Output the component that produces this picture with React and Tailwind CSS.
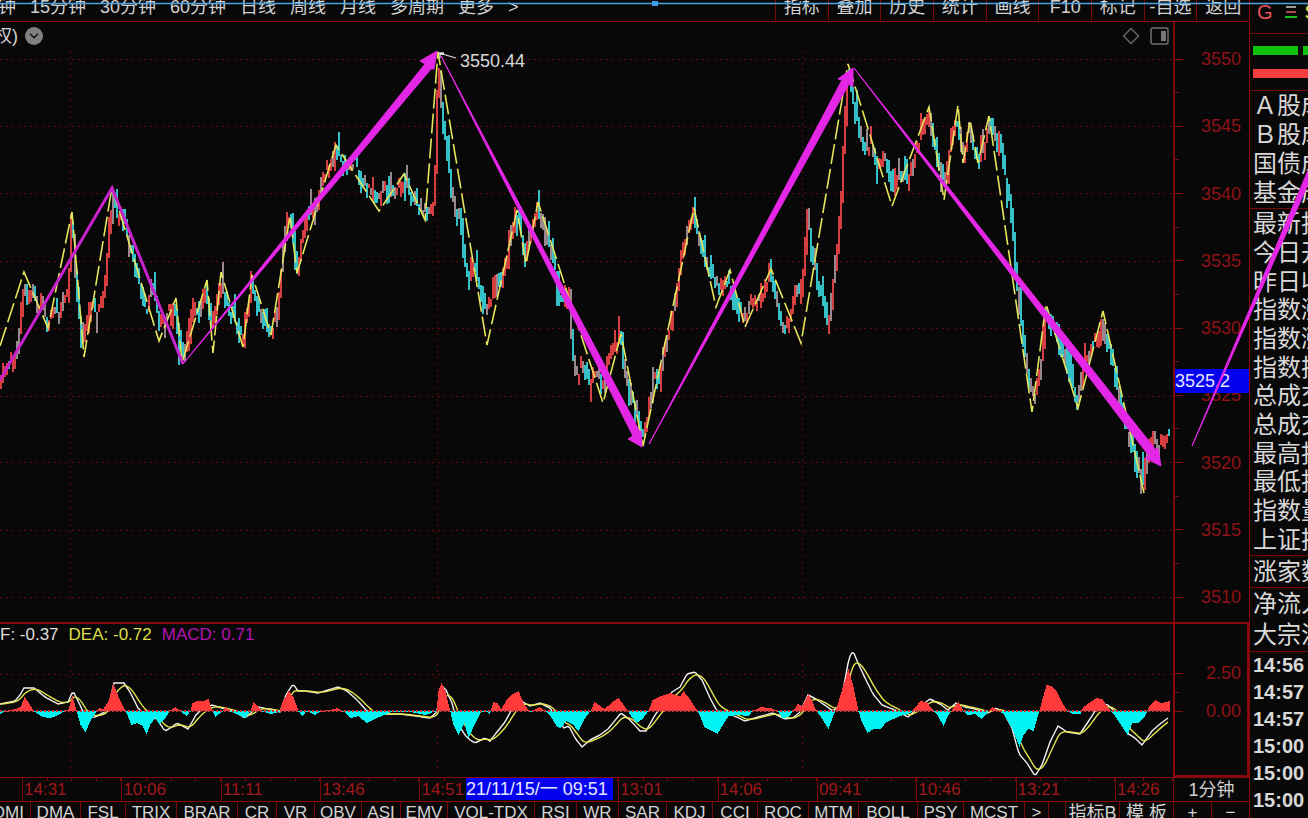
import React from 'react';
import { ChevronDown } from 'lucide-react';

const PERIODS = ['钟', '15分钟', '30分钟', '60分钟', '日线', '周线', '月线', '多周期', '更多', '>'];
const TOOLS = ['指标', '叠加', '历史', '统计', '画线', 'F10', '标记', '-自选', '返回'];

const INDICATORS = [
  ['DMA', 'w-[50px]'], ['FSL', 'w-[45px]'], ['TRIX', 'w-[51px]'], ['BRAR', 'w-[61px]'],
  ['CR', 'w-[39px]'], ['VR', 'w-[38px]'], ['OBV', 'w-[47px]'], ['ASI', 'w-[39px]'],
  ['EMV', 'w-[47px]'], ['VOL-TDX', 'w-[87px]'], ['RSI', 'w-[42px]'], ['WR', 'w-[42px]'],
  ['SAR', 'w-[48px]'], ['KDJ', 'w-[46px]'], ['CCI', 'w-[45px]'], ['ROC', 'w-[51px]'],
  ['MTM', 'w-[50px]'], ['BOLL', 'w-[59px]'], ['PSY', 'w-[46px]'], ['MCST', 'w-[61px]'],
  ['>', 'w-[24px]'],
];

const TIMES = ['14:31', '10:06', '11:11', '13:46', '14:51', '', '13:01', '14:06', '09:41', '10:46', '13:21'];
const PRICES = ['3550', '', '3545', '', '3540', '', '3535', '', '3530', '', '3525', '', '3520', '', '3515', '', '3510'];
const GRID_Y = [59, 126, 193, 261, 328, 396, 462, 530, 597];
const DAY_X = [70, 437, 802];

const GROUPS = [
  { rows: ['Ａ股成', 'Ｂ股成', '国债成', '基金成'], h: 'h-[118px]' },
  { rows: ['最新指', '今日开', '昨日收', '指数涨', '指数涨', '指数振', '总成交', '总成交', '最高指', '最低指', '指数量', '上证换'], h: 'h-[347px]' },
  { rows: ['涨家数'], h: 'h-[32px]' },
  { rows: ['净流入', '大宗流'], h: 'h-[64px]' },
];
const TICKS = ['14:56', '14:57', '14:57', '15:00', '15:00', '15:00'];

// 走势锚点
const PRICE_PATH = [
  [0, 388], [4, 372], [8, 362], [14, 358], [18, 345], [22, 310], [25, 285], [29, 298], [33, 290], [38, 312],
  [43, 303], [48, 322], [54, 312], [60, 310], [64, 298], [69, 290], [71, 240], [73, 222], [76, 270], [80, 320],
  [84, 345], [88, 320], [93, 300], [97, 312], [103, 300], [107, 280], [110, 225], [114, 200], [118, 218], [122, 212],
  [126, 222], [130, 250], [136, 265], [142, 295], [147, 312], [152, 288], [156, 300], [160, 325], [165, 315], [170, 310],
  [175, 302], [180, 340], [184, 358], [190, 330], [195, 303], [200, 310], [206, 285], [212, 330], [218, 300], [222, 280],
  [230, 310], [237, 325], [243, 340], [248, 310], [252, 285], [258, 305], [265, 320], [271, 330], [277, 320], [281, 280],
  [285, 235], [289, 222], [293, 230], [298, 265], [303, 240], [308, 210], [313, 215], [318, 200], [322, 180], [328, 170],
  [333, 155], [336, 148], [341, 160], [346, 165], [350, 162], [356, 162], [362, 182], [368, 190], [373, 188], [379, 200],
  [385, 185], [392, 190], [398, 188], [404, 178], [410, 193], [416, 198], [423, 210], [430, 212], [435, 204], [437, 130],
  [439, 62], [441, 90], [444, 125], [448, 150], [452, 190], [457, 220], [460, 215], [465, 260], [470, 280], [475, 265],
  [480, 285], [487, 305], [492, 300], [497, 270], [502, 285], [508, 255], [513, 225], [517, 215], [522, 235], [526, 258],
  [531, 235], [538, 207], [543, 220], [550, 250], [556, 270], [560, 300], [565, 305], [570, 290], [573, 350], [577, 378],
  [583, 365], [590, 380], [597, 370], [603, 385], [608, 360], [615, 345], [621, 338], [626, 370], [632, 395], [638, 415],
  [643, 438], [648, 415], [654, 380], [660, 380], [664, 350], [670, 330], [676, 300], [682, 260], [688, 230], [694, 213],
  [700, 240], [706, 262], [712, 275], [720, 290], [727, 275], [733, 290], [740, 310], [746, 315], [753, 305], [760, 300],
  [765, 290], [771, 278], [776, 300], [781, 318], [786, 328], [791, 315], [796, 290], [801, 300], [804, 270], [808, 215],
  [813, 250], [818, 280], [822, 290], [826, 310], [829, 328], [833, 290], [838, 250], [842, 190], [845, 120], [848, 75],
  [851, 90], [855, 110], [860, 130], [867, 150], [872, 145], [878, 160], [883, 158], [888, 165], [893, 190], [900, 175],
  [908, 180], [914, 160], [920, 140], [926, 120], [930, 112], [934, 140], [940, 165], [945, 185], [950, 150], [957, 115],
  [963, 155], [969, 128], [975, 150], [980, 158], [986, 140], [990, 122], [997, 142], [1001, 132], [1005, 170], [1009, 190],
  [1013, 215], [1016, 270], [1021, 320], [1026, 360], [1031, 388], [1036, 395], [1042, 360], [1046, 315], [1052, 325],
  [1058, 332], [1065, 360], [1072, 385], [1078, 400], [1084, 365], [1092, 345], [1098, 340], [1103, 320], [1110, 350],
  [1116, 375], [1122, 410], [1126, 430], [1132, 440], [1138, 460], [1144, 483], [1150, 445], [1155, 438], [1158, 450],
  [1163, 437], [1168, 432],
];

const ZIGZAG =
  '0,346 24,272 48,328 72,212 84,357 112,187 159,341 176,298 182,363 207,280 213,353 221,272 243,347 252,275 271,335 ' +
  '290,216 297,273 336,145 379,211 404,174 425,220 438,52 487,345 517,210 526,264 538,202 603,403 621,334 643,446 ' +
  '694,208 716,307 730,270 745,327 771,269 801,343 848,64 892,206 929,107 944,200 958,105 963,163 970,120 978,163 ' +
  '989,116 1032,412 1046,304 1078,408 1103,311 1144,493';

const HIST = [
  [0, -3], [5, 0], [15, 2], [20, 4], [24, 14], [28, 9], [33, 0], [36, -2], [42, -6], [50, -7], [58, -4], [64, 0],
  [68, 2], [72, 15], [75, 4], [77, -3], [80, -14], [85, -21], [90, -10], [95, -2], [99, 3], [103, 2], [108, 10],
  [113, 27], [118, 14], [125, 0], [127, -4], [131, -14], [137, -12], [142, -15], [146, -23], [150, -13], [155, -7],
  [159, -13], [165, -7], [169, 0], [175, 4], [180, 0], [186, -5], [190, 0], [192, 8], [197, 10], [203, 10], [208, 12],
  [211, 2], [215, -6], [222, 0], [225, 4], [230, 0], [236, -3], [245, -7], [250, 0], [253, 9], [257, 5], [262, 0],
  [270, -3], [279, -1], [282, 9], [288, 20], [293, 14], [298, 0], [302, -5], [306, 0], [315, -4], [320, 0], [330, 1],
  [337, 3], [343, 0], [350, -7], [358, -5], [366, -12], [374, -8], [384, -4], [390, -1], [410, -1], [425, -4],
  [436, 0], [438, 20], [441, 28], [445, 20], [449, 3], [453, -14], [458, -24], [464, -12], [468, -27], [474, -14],
  [480, -2], [485, 1], [489, -3], [493, 9], [497, 8], [501, 2], [506, 11], [512, 17], [518, 20], [524, 6], [530, -1],
  [539, 4], [545, 0], [550, -5], [556, -15], [560, -17], [566, -10], [572, -13], [578, -20], [584, -8], [590, 0],
  [594, 9], [600, 5], [604, 2], [612, 9], [618, 13], [624, 5], [629, -3], [636, -12], [642, -8], [648, 0], [652, 11],
  [658, 14], [664, 16], [670, 18], [675, 16], [680, 15], [683, 20], [690, 11], [696, 2], [699, -4], [704, -16],
  [712, -20], [717, -23], [723, -13], [728, -5], [738, -4], [748, -5], [752, 0], [760, 4], [770, 3], [777, 0],
  [782, -7], [788, -6], [793, 0], [797, 7], [802, 5], [808, 17], [812, 9], [816, 0], [820, -5], [828, -18], [833, -4],
  [837, 6], [843, 26], [848, 42], [853, 24], [858, 0], [861, -10], [867, -22], [873, -18], [880, -18], [886, -11],
  [893, -8], [900, -5], [910, -2], [914, 3], [920, 10], [926, 9], [932, 2], [937, -4], [943, -15], [948, -4], [952, 2],
  [958, 9], [963, 0], [967, -4], [975, -3], [981, -8], [987, -2], [992, 4], [998, 1], [1004, -4], [1012, -18],
  [1019, -36], [1023, -24], [1028, -18], [1033, -20], [1038, -3], [1041, 8], [1046, 26], [1051, 25], [1056, 20],
  [1062, 8], [1067, 0], [1072, -3], [1080, -3], [1083, 4], [1090, 9], [1096, 13], [1102, 12], [1108, 3], [1114, -4],
  [1120, -13], [1127, -24], [1132, -12], [1138, -12], [1144, -6], [1149, 5], [1155, 11], [1161, 8], [1169, 10],
];

const DIF = [
  [0, 704], [15, 701], [20, 695], [24, 688], [34, 688], [45, 697], [58, 704], [68, 702], [73, 691], [80, 705],
  [86, 718], [95, 717], [105, 712], [110, 700], [114, 683], [124, 683], [130, 692], [138, 708], [150, 720], [156, 718],
  [165, 731], [172, 727], [177, 723], [188, 729], [196, 715], [202, 709], [212, 705], [225, 709], [235, 712],
  [245, 718], [252, 712], [258, 707], [268, 709], [280, 712], [286, 695], [293, 684], [298, 691], [305, 691],
  [318, 693], [338, 687], [347, 691], [357, 700], [366, 710], [374, 716], [385, 714], [400, 714], [415, 716],
  [430, 718], [437, 712], [442, 686], [446, 690], [452, 703], [457, 722], [465, 735], [470, 740], [475, 743],
  [485, 738], [490, 741], [497, 732], [505, 722], [512, 709], [519, 700], [530, 706], [540, 703], [550, 708],
  [558, 720], [564, 728], [569, 726], [575, 738], [582, 747], [590, 740], [600, 735], [608, 729], [621, 713],
  [630, 720], [640, 731], [646, 731], [655, 715], [665, 702], [672, 692], [680, 687], [687, 674], [695, 672],
  [702, 680], [710, 698], [717, 711], [728, 713], [745, 721], [758, 717], [773, 713], [785, 719], [793, 718],
  [800, 712], [808, 695], [816, 699], [826, 706], [833, 711], [840, 705], [845, 680], [849, 658], [853, 651],
  [858, 663], [865, 678], [873, 694], [882, 705], [895, 710], [908, 717], [918, 708], [930, 699], [940, 704],
  [948, 710], [956, 703], [965, 707], [975, 709], [988, 713], [995, 708], [1003, 711], [1012, 728], [1019, 754],
  [1027, 763], [1035, 776], [1042, 765], [1050, 742], [1058, 726], [1067, 732], [1080, 734], [1088, 722], [1097, 708],
  [1107, 704], [1115, 712], [1127, 733], [1135, 738], [1142, 745], [1152, 731], [1160, 724], [1168, 718],
];

// 线性插值，步长 step
function sample(points, step) {
  const out = [];
  let i = 0;
  for (let x = points[0][0]; x <= points[points.length - 1][0]; x += step) {
    while (i < points.length - 2 && points[i + 1][0] < x) i++;
    const [x0, y0] = points[i];
    const [x1, y1] = points[i + 1];
    out.push([x, y0 + ((y1 - y0) * (x - x0)) / (x1 - x0)]);
  }
  return out;
}

const noise = (n) => {
  const v = Math.sin(n * 12.9898) * 43758.5453;
  return v - Math.floor(v);
};

const line = sample(PRICE_PATH, 2);
const candles = line.map(([x, y], i) => {
  const next = line[i + 1] ? line[i + 1][1] : y;
  const shift = (noise(i + 7) - 0.5) * 12;
  const wick = noise(i + 61) > 0.82 ? 12 : 0;
  const up = noise(i + 17) > 0.5;
  const top = Math.min(y, next) - 1 - noise(i) * 6 + shift - (up ? wick : 0);
  const bottom = Math.max(y, next) + 1 + noise(i + 500) * 7 + shift + (up ? 0 : wick);
  const flat = Math.abs(next - y) < 2;
  let color = next < y ? '#d63f42' : '#35bfc6';
  if (flat && noise(i + 90) > 0.4) color = noise(i + 30) > 0.5 ? '#d63f42' : '#35bfc6';
  if (noise(i + 900) > 0.8) color = '#98878c';
  return { x, top: Math.max(top, 54), h: bottom - Math.max(top, 54), color };
});

const bars = sample(HIST, 1);

const dif = sample(DIF, 2);
let last = dif[0][1];
const dea = dif.map(([x, y]) => {
  last += (y - last) * 0.28;
  return [x, last];
});

const toPoints = (arr) => arr.map((p) => p.join(',')).join(' ');

function Toolbar() {
  return (
    <header className="flex h-[22px] shrink-0 justify-between overflow-hidden border-b border-[#8a0c0c] text-lg text-[#d2d2d2]">
      <nav className="-ml-[2px] flex items-center gap-[14px] pb-2">
        {PERIODS.map((p) => <button key={p} className="whitespace-nowrap">{p}</button>)}
      </nav>
      <div className="grid w-[474px] grid-cols-9">
        {TOOLS.map((t) => (
          <button key={t} className="flex h-[21px] items-center justify-center whitespace-nowrap border-l border-[#7a0a0a] pb-2">{t}</button>
        ))}
      </div>
    </header>
  );
}

function PriceChart() {
  return (
    <div className="relative min-w-0 flex-1">
      <svg className="absolute inset-0 h-full w-full" viewBox="0 22 1173 600" preserveAspectRatio="none">
        <g stroke="#600a0a" strokeDasharray="2 4" shapeRendering="crispEdges">
          {GRID_Y.map((y) => <line key={y} x1="0" x2="1173" y1={y + 0.5} y2={y + 0.5} />)}
          {DAY_X.map((x) => <line key={x} x1={x} x2={x} y1="51" y2="600" />)}
        </g>
        <g shapeRendering="crispEdges">
          {candles.map((c) => <rect key={c.x} x={c.x} y={c.top} width="2" height={c.h} fill={c.color} />)}
        </g>
        <polyline points={ZIGZAG} fill="none" stroke="#e6e65a" strokeWidth="1.6" strokeDasharray="20 5" />
        <path d="M438 53h6M439 53l17 5M440 53v5" fill="none" stroke="#ddd" strokeWidth="1.3" />
        <text x="460" y="67" fill="#d8d8d8" fontSize="18">3550.44</text>
      </svg>
      <div className="absolute top-0 right-0 left-0 flex h-7 items-center pr-1 text-lg text-[#d2d2d2]">
        <span className="-ml-[6px]">权)</span>
        <button aria-label="展开" className="ml-[7px] flex h-[18px] w-[18px] items-center justify-center rounded-full bg-[#808080] text-[#161616]">
          <ChevronDown size={14} strokeWidth={3} />
        </button>
        <div className="ml-auto flex items-center gap-[10px]">
          <button aria-label="标记点">
            <svg width="18" height="18" viewBox="0 0 18 18" fill="none" stroke="#666" strokeWidth="1.5"><path d="M9 1.5 16.5 9 9 16.5 1.5 9z" /></svg>
          </button>
          <button aria-label="侧栏">
            <svg width="19" height="18" viewBox="0 0 19 18"><rect x="1" y="1" width="17" height="16" rx="2" fill="none" stroke="#707070" strokeWidth="1.5" /><rect x="11" y="4" width="5" height="10" fill="#777" /></svg>
          </button>
        </div>
      </div>
    </div>
  );
}

function PriceAxis() {
  return (
    <div className="relative flex w-[76px] shrink-0 flex-col justify-between border-l-2 border-[#7a0808] pt-[27px] pr-2 pb-[15px] text-lg text-[#8f1216]">
      {PRICES.map((p, i) => (
        <div key={i} className="flex h-5 items-center justify-between">
          <i className={p ? 'h-px w-2 bg-[#8a0c0c]' : 'h-px w-1 bg-[#8a0c0c]'} />
          <span>{p}</span>
        </div>
      ))}
      <div className="absolute top-[347px] right-0 left-0 flex h-6 items-center bg-[#0202f0] text-[#e6e6ff]">3525.2</div>
    </div>
  );
}

function MacdPanel() {
  return (
    <section className="flex h-[155px] shrink-0 border-t-2 border-[#8a0808]">
      <div className="relative min-w-0 flex-1">
        <svg className="absolute inset-0 h-full w-full" viewBox="0 624 1173 153" preserveAspectRatio="none">
          <g stroke="#600a0a" strokeDasharray="2 4" shapeRendering="crispEdges">
            <line x1="0" x2="1173" y1="674.5" y2="674.5" />
            {DAY_X.map((x) => <line key={x} x1={x} x2={x} y1="652" y2="777" />)}
          </g>
          <polyline points={toPoints(dif)} fill="none" stroke="#f2f2f2" strokeWidth="1.4" />
          <polyline points={toPoints(dea)} fill="none" stroke="#e6e650" strokeWidth="1.4" />
          <g shapeRendering="crispEdges">
            {bars.map(([x, v]) => (
              <rect key={x} x={x} y={v > 0 ? 711 - v : 711} width="1" height={Math.max(Math.abs(v), 1)} fill={v > 0 ? '#ff3b3b' : '#00f4f4'} />
            ))}
            <line x1="0" x2="1170" y1="711" y2="711" stroke="#c23a3a" strokeWidth="2" strokeDasharray="2 2" />
          </g>
        </svg>
        <p className="absolute top-0 left-0 flex gap-[10px] text-[17px] leading-[22px] whitespace-nowrap">
          <span className="text-[#dedede]">F: -0.37</span>
          <span className="text-[#dede46]">DEA: -0.72</span>
          <span className="text-[#b414b4]">MACD: 0.71</span>
        </p>
      </div>
      <div className="w-[76px] shrink-0 border-2 border-t-0 border-[#8a0808] pt-[40px] pr-[6px] text-lg leading-[19px] text-[#8f1216]">
        {['2.50', '', '0.00'].map((v, i) => (
          <div key={i} className="flex h-[19px] items-center justify-between">
            <i className={v ? 'h-px w-2 bg-[#8a0c0c]' : 'h-px w-1 bg-[#8a0c0c]'} />
            <span>{v}</span>
          </div>
        ))}
      </div>
    </section>
  );
}

function TimeCell({ time, size, ticks }) {
  return (
    <div className={`${size} border-l border-[#7a0808]`}>
      <div className="flex h-[3px]">
        {ticks.map((t) => <i key={t} className="flex-1 border-r border-[#7a0808]" />)}
      </div>
      <p className="pl-px text-[17px] leading-[18px]">{time}</p>
    </div>
  );
}

function TimeAxis() {
  return (
    <div className="flex h-6 shrink-0 border-t border-[#8a0808]">
      <div className="relative flex min-w-0 flex-1 pl-[22px] text-[#a0181a]">
        {TIMES.map((t, i) => <TimeCell key={i} time={t} size="w-[99px] grow" ticks={[1, 2, 3, 4]} />)}
        <TimeCell time="14:26" size="w-[58px]" ticks={[1, 2]} />
        <div className="absolute top-0 left-[466px] flex h-[22px] w-[147px] items-center bg-[#0202f0] text-lg whitespace-nowrap text-[#e6e6ff]">21/11/15/一 09:51</div>
      </div>
      <button className="w-[76px] shrink-0 border-l border-[#7a0808] text-lg leading-[22px] text-[#d2d2d2]">1分钟</button>
    </div>
  );
}

function IndicatorTabs() {
  const tab = 'flex h-[21px] shrink-0 items-center justify-center whitespace-nowrap border-l border-[#7a0808]';
  return (
    <nav className="flex h-[17px] shrink-0 items-start overflow-hidden border-t border-[#8a0808] text-[17px] text-[#d2d2d2]">
      <button className="flex h-[21px] w-[30px] shrink-0 items-center justify-end pr-[6px]">DMI</button>
      {INDICATORS.map(([name, w]) => <button key={name} className={`${tab} ${w}`}>{name}</button>)}
      <div className={`${tab} w-[17px] grow`} />
      <button className={`${tab} w-[54px] text-lg`}>指标B</button>
      <button className={`${tab} w-[54px] text-lg`}>模 板</button>
      <button className={`${tab} w-[38px]`}>+</button>
      <button className={`${tab} w-[38px]`}>−</button>
    </nav>
  );
}

function QuotePanel() {
  return (
    <aside className="w-[59px] shrink-0 overflow-hidden border-l border-[#8a0808] text-2xl whitespace-nowrap text-[#d8d8d8]">
      <div className="flex h-[34px] items-start gap-3 border-b border-[#7a0808] pl-[7px] text-xl leading-6">
        <b className="font-normal text-[#e8505a]">G</b>
        <svg className="mt-[5px] shrink-0" width="12" height="14" viewBox="0 0 12 14" shapeRendering="crispEdges">
          <path d="M1 2h10" stroke="#999" strokeWidth="2" />
          <path d="M1 7h10" stroke="#b04a4a" strokeWidth="2" />
          <path d="M0 12h12" stroke="#18c018" strokeWidth="2" />
        </svg>
        <span className="-ml-1 text-[#e6e63c]">S</span>
      </div>
      <div className="flex h-[57px] flex-col gap-[14px] border-b border-[#7a0808] pt-3 pl-[3px]">
        <div className="flex gap-[5px]">
          <i className="h-[9px] w-[45px] shrink-0 bg-[#0ec20e]" />
          <i className="h-[9px] flex-1 bg-[#0ec20e]" />
        </div>
        <i className="h-[9px] bg-[#f53e3e]" />
      </div>
      {GROUPS.map((g, i) => (
        <ul key={i} className={`${g.h} grid auto-rows-fr border-b border-[#7a0808] py-px pl-[3px]`}>
          {g.rows.map((r, j) => <li key={j} className="flex items-center leading-7">{r}</li>)}
        </ul>
      ))}
      <ul className="pl-[3px] text-xl leading-[27px] font-bold">
        {TICKS.map((t, i) => <li key={i}>{t}</li>)}
      </ul>
    </aside>
  );
}

// 手绘箭头
function Drawings() {
  return (
    <svg className="pointer-events-none absolute inset-0 h-full w-full" viewBox="0 0 1308 818" preserveAspectRatio="none" fill="#e426e6">
      <path d="M0 380 112 188 183 364" fill="none" stroke="#c822cc" strokeWidth="3" />
      <g stroke="#e426e6" strokeWidth="1">
        <path d="M183 364 425 64 420 61 437 51 434 69 431 69z" />
        <path d="M441 56 640 432 641 431 642 447 628 439 633 436z" />
        <path d="M649 444 842 80 838 79 853 68 853 87 849 84z" />
        <path d="M854 68 1156 450 1158 448 1161 466 1145 458 1149 456z" />
        <path d="M1192 446 1309 168V182z" />
      </g>
      <path d="M0 3.5h1308" stroke="#4aa3df" strokeWidth="1.5" />
      <rect x="652" y="1" width="6" height="5" fill="#3b9be6" />
    </svg>
  );
}

export default function App() {
  return (
    <div className="relative flex h-screen overflow-hidden bg-[#080808] font-['Liberation_Sans','Noto_Sans_CJK_SC',sans-serif]">
      <main className="flex min-w-0 flex-1 flex-col">
        <Toolbar />
        <section className="flex min-h-0 flex-1">
          <PriceChart />
          <PriceAxis />
        </section>
        <MacdPanel />
        <TimeAxis />
        <IndicatorTabs />
      </main>
      <QuotePanel />
      <Drawings />
    </div>
  );
}
